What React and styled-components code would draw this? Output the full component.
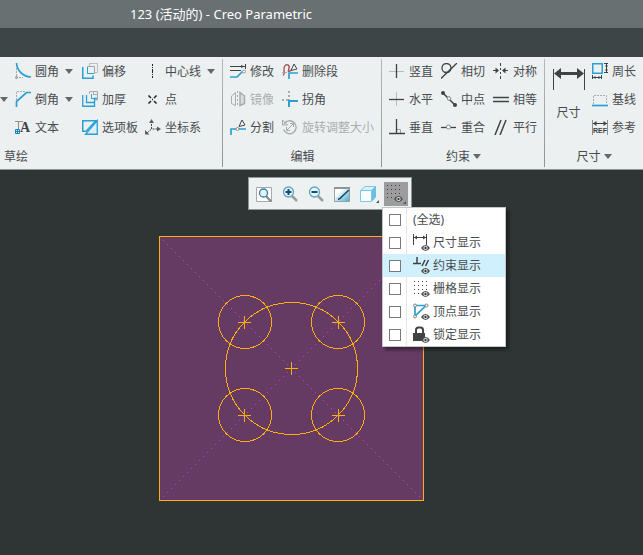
import React from "react";
import styled, { createGlobalStyle } from "styled-components";

const BLUE = "#2b9fd3";
const INK = "#3f4345";
const GREY = "#a9adae";
const ORANGE = "#ffae0d";

const GlobalStyle = createGlobalStyle`
  * { box-sizing: border-box; }
  body {
    margin: 0;
    background: #2f3535;
    font-family: "Noto Sans", "Noto Sans CJK SC", sans-serif;
    font-size: 12px;
    color: #484c4e;
  }
  button, input { font: inherit; color: inherit; margin: 0; }
`;

const Window = styled.div`
  display: flex;
  flex-direction: column;
  min-height: 100vh;
  overflow: hidden;
`;

const TitleBar = styled.header`
  height: 28px;
  padding-left: 130px;
  background: #687071;
  color: #fff;
  font-size: 13px;
  line-height: 28px;
  white-space: nowrap;
`;

const Title = styled.h1`
  margin: 0;
  font: inherit;
`;

const TabStrip = styled.nav`
  height: 29px;
  background: #3d4546;
`;

const RibbonBar = styled.section`
  display: flex;
  background: #edf0f1;
  border-bottom: 1px solid #8a9495;
  overflow: hidden;
`;

const Group = styled.section`
  flex: ${(p) => (p.$width ? `0 0 ${p.$width}px` : "1 0 0")};
  display: flex;
  flex-direction: column;
  background: ${(p) => (p.$width ? "linear-gradient(#b4b9ba, #8f9697) right center / 1px calc(100% - 4px) no-repeat" : "none")};
`;

const Columns = styled.div`
  display: flex;
  padding-left: ${(p) => p.$inset || 0}px;
`;

const Column = styled.div`
  flex: none;
  width: ${(p) => p.$width}px;
  display: grid;
  grid-template-rows: repeat(3, 28px);
`;

const GroupLabel = styled.h2`
  display: flex;
  align-items: center;
  justify-content: ${(p) => (p.$start ? "flex-start" : "center")};
  gap: 3px;
  height: 28px;
  margin: 0;
  padding-top: 2px;
  padding-left: ${(p) => (p.$start ? 4 : 0)}px;
  font: inherit;
`;

const Command = styled.button`
  display: flex;
  align-items: center;
  gap: 4px;
  padding: 0;
  border: 0;
  background: none;
  white-space: nowrap;
  line-height: 18px;
  &:disabled { color: #aaaeaf; }
`;

const CommandText = styled.span`
  padding-top: 2px;
`;

const LargeCommand = styled.button`
  display: flex;
  flex-direction: column;
  align-items: center;
  gap: 14px;
  width: 47px;
  padding: 11px 0 0;
  border: 0;
  background: none;
  line-height: 18px;
`;

const Row = styled.div`
  display: flex;
  align-items: center;
  gap: 6px;
  ${(p) => p.$row && `grid-row: ${p.$row};`}
`;

const ArrowButton = styled.button`
  display: flex;
  padding: 0;
  border: 0;
  background: none;
`;

const Caret = styled.span`
  border: 4px solid transparent;
  border-top: 5px solid #63686a;
  border-bottom: 0;
`;

const Icon = styled.svg`
  flex: none;
  display: block;
  fill: none;
  stroke: ${INK};
`;

const Canvas = styled.main`
  position: relative;
  flex: 1;
  padding: 66px 0 54px 159px;
  background: #2f3535;
`;

const Sketch = styled.svg`
  display: block;
`;

const Toolbar = styled.div`
  position: absolute;
  top: 7px;
  left: 248px;
  display: flex;
  gap: 2px;
  padding: 4px 3px 3px;
  border: 1px solid #8c9697;
  background: #eef1f1;
`;

const Tool = styled.button`
  display: grid;
  place-items: center;
  width: ${(p) => p.$width || 24}px;
  height: 24px;
  padding: 0;
  border: 0;
  background: ${(p) => (p.$active ? "#9d9d9d" : "none")};
`;

const MenuAnchor = styled.div`
  position: relative;
`;

const Menu = styled.div`
  position: absolute;
  z-index: 1;
  top: 25px;
  left: -2px;
  width: 124px;
  border: 1px solid #c4c7c8;
  background: #fff;
  box-shadow: 3px 3px 3px rgba(0, 0, 0, 0.4);
`;

const MenuRow = styled.label`
  display: flex;
  align-items: center;
  height: 23px;
  white-space: nowrap;
  background: ${(p) => (p.$highlight ? "#d0f0fe" : "#fff")};
`;

const CheckCell = styled.span`
  display: grid;
  place-items: center;
  width: 24px;
  height: 23px;
  margin-right: 6px;
  border-right: 1px solid ${(p) => (p.$highlight ? "#d0f0fe" : "#e4e6e7")};
`;

const Check = styled.input`
  appearance: none;
  width: 12px;
  height: 12px;
  border: 1px solid #77797a;
  background: #fff;
  &:checked { background: ${BLUE}; }
`;

const MenuText = styled.span`
  margin-left: ${(p) => (p.$indent ? 2 : 0)}px;
  line-height: 18px;
`;

const Eye = ({ x = 8, y = 11 }) => (
  <g transform={`translate(${x} ${y})`} stroke="none">
    <path d="M0 3Q2 0 4.500 0T9 3Q7 6 4.500 6T0 3Z" fill="#4c4f51" />
    <circle cx="4.500" cy="3" r="2.100" fill="#fff" />
    <circle cx="4.500" cy="3" r="1.200" fill="#333" />
  </g>
);

const gridDots = (cols, rows) => {
  let d = "";
  for (let r = 0; r < rows; r++) for (let c = 0; c < cols; c++) d += `M${c * 4 + 1} ${r * 4 + 1}h1v1h-1z`;
  return d;
};

const cursor = <path d="M12 1L15 6L9 7.500Z" fill="#f4f6f6" />;

const drawings = {
  fillet: (
    <>
      <path d="M1.500 5V14.500H8" stroke={GREY} strokeDasharray="2 1" />
      <path d="M1.500 0C2 7 7 13.500 16 14" stroke={BLUE} strokeWidth="1.700" />
      <circle cx="1.500" cy="14.500" r="1" stroke="#888" />
    </>
  ),
  chamfer: (
    <>
      <path d="M1.500 9V.5H10" stroke={GREY} strokeDasharray="2 1" />
      <path d="M16 1.500H11.500L1.500 10.500V16" stroke={BLUE} strokeWidth="1.700" />
    </>
  ),
  text: (
    <>
      <path d="M0 2.500H8M3.500 2.500V10" stroke="#8b8f90" />
      <text x="5" y="13" fontFamily="Liberation Serif" fontWeight="700" fontSize="14" fill={INK} stroke="none">A</text>
      <path d="M.5 10.500H4.500V14.500H.5ZM2.500 10.500V14.500M.5 12.500H4.500" stroke="#1682b4" fill="#d9f1fa" />
    </>
  ),
  offset: (
    <>
      <path d="M7.500 3V.5H15.500V9.500H13" stroke="#b9bdbe" />
      <path d="M5.500 3.500H12.500V10.500H5.500Z" stroke="#a0a4a5" />
      <path d="M.75 4V15.250H11V12.500" stroke={BLUE} strokeWidth="1.500" />
      <path d="M5.500 4V10.500H12" stroke={BLUE} />
    </>
  ),
  thicken: (
    <>
      <path d="M7.500 3V.5H15.500V9H13M11.500 .5V4M11 3.500H15" stroke="#a6aaab" />
      <path d="M.75 4V15.250H12.500V12M4.500 4V11.500H12.500V7.500H15" stroke={BLUE} strokeWidth="1.300" />
      <path d="M9.500 3V7.500H13" stroke={BLUE} />
    </>
  ),
  palette: (
    <>
      <path d="M.75 1.750H14L4 12.250H.75Z" stroke={BLUE} strokeWidth="1.500" />
      <path d="M15.250 1.500V15.250H3.500Z" fill="#dceff6" stroke={BLUE} strokeWidth="1.300" />
    </>
  ),
  centerline: <path d="M7.500 1V3M7.500 4V5M7.500 6V10M7.500 11V12M7.500 13V15" stroke="#222" />,
  point: <path d="M3.500 4.500L6 7M9 10L11.500 12.500M11.500 4.500L9 7M6 10L3.500 12.500M7 8.500H8" stroke="#222" strokeWidth="1.500" />,
  csys: (
    <>
      <path d="M6.500 5V10H12M6 10.500L2 14" strokeDasharray="2 1" />
      <path d="M6.500 0L9 4H4ZM16 10L12 7.500V12.500ZM0 15.500V11L4.500 15.500Z" fill="#5b5f60" stroke="none" />
    </>
  ),
  modify: (
    <>
      <path d="M0 3.500H15M15.500 1V6M0 7.500H11" />
      <path d="M11 2L14.500 3.500L11 5Z" fill={INK} stroke="none" />
      <path d="M0 14H7L12.500 8.500" stroke={BLUE} strokeWidth="1.700" />
      <circle cx="14" cy="8.500" r="1.500" stroke="#999" fill="#fff" />
    </>
  ),
  mirror: (
    <>
      <path d="M1.500 12.500V5L5.500 1.500V14.500Z" stroke={GREY} />
      <path d="M14.500 12.500V5L10 1.500V14.500Z" stroke={GREY} fill="#dadddd" strokeWidth="1.500" />
      <path d="M7.500 0V16" stroke={GREY} strokeDasharray="2 2" />
    </>
  ),
  divide: (
    <>
      <path d="M1 16V10H6M9 10H16" stroke={BLUE} strokeWidth="1.700" />
      {cursor}
      <circle cx="7.500" cy="10" r="1.500" stroke="#888" fill="#fff" />
    </>
  ),
  deleteSegment: (
    <>
      <path d="M1 12.500C4 10 .5 7 2.500 3.500S8 2 7 5.500S5.500 9 9 7.500" stroke="#a65050" strokeWidth="1.400" />
      {cursor}
      <path d="M7 16V10H16" stroke={BLUE} strokeWidth="1.700" />
      <path d="M0 9.500H6" stroke={GREY} strokeDasharray="2 1" />
    </>
  ),
  corner: (
    <>
      <path d="M7 0V9M0 9H6" stroke={GREY} strokeWidth="2" strokeDasharray="2 2" />
      <path d="M7 16V10H16" stroke={BLUE} strokeWidth="2" />
    </>
  ),
  rotate: (
    <g stroke="#a5a9aa">
      <path d="M2 5A6.500 6.500 0 1 1 1.500 10.500" strokeWidth="1.300" />
      <path d="M.5 1V6H5.500ZM5 11L11 5M4.500 8V11.500H8M8 4.500H11.500V8" />
    </g>
  ),
  vertical: (
    <>
      <path d="M0 8.500H15" stroke="#b7bbbb" />
      <path d="M7.500 1V15" strokeWidth="1.300" />
    </>
  ),
  horizontal: (
    <>
      <path d="M7.500 1V15" stroke="#b7bbbb" />
      <path d="M0 8.500H15" strokeWidth="1.300" />
    </>
  ),
  perpendicular: (
    <>
      <path d="M8 10.500H11.500V14" stroke="#9da1a2" />
      <path d="M7.500 0V14.500M0 14.500H16" strokeWidth="1.300" />
    </>
  ),
  tangent: (
    <>
      <circle cx="5.500" cy="5" r="4.500" strokeWidth="1.300" />
      <path d="M0 15.500L16 0" strokeWidth="1.300" />
    </>
  ),
  midpoint: (
    <>
      <path d="M2 2L14 14" strokeWidth="1.500" />
      <circle cx="2" cy="2" r="2" fill={INK} stroke="none" />
      <circle cx="14" cy="14" r="2" fill={INK} stroke="none" />
      <circle cx="8" cy="7.500" r="1.800" fill="#eee" stroke="#888" />
    </>
  ),
  coincident: (
    <>
      <path d="M0 8.500H15" strokeWidth="1.300" />
      <circle cx="7.500" cy="8" r="2" fill="#fff" stroke="#888" />
    </>
  ),
  symmetric: (
    <>
      <path d="M7.500 0V3M7.500 5V7M7.500 9V11M7.500 13V16M0 7.500H4M11 7.500H15" />
      <path d="M2.500 4.500L6 7.500L2.500 10.500ZM12.500 4.500L9 7.500L12.500 10.500Z" fill={INK} stroke="none" />
    </>
  ),
  equal: <path d="M0 6.500H16M0 10.500H16" strokeWidth="1.500" />,
  parallel: <path d="M2 16L8 1M7 16L13 1" strokeWidth="1.500" />,
  perimeter: (
    <>
      <path d="M.75 .75H10.250V10.250H.75Z" stroke={BLUE} strokeWidth="1.500" />
      <path d="M12 .5H16M12 9.500H16M14.500 1V9M.5 12V16M9.500 12V16M1 14.500H9" />
      <path d="M14.500 1L16 3.500H13ZM14.500 9L16 6.500H13ZM1 14.500L3.500 13V16ZM9 14.500L6.500 13V16Z" fill={INK} stroke="none" />
    </>
  ),
  baseline: (
    <>
      <path d="M1.500 13V4.500H14.500V13" stroke={GREY} strokeDasharray="2 1" />
      <path d="M0 14.500H16" stroke={BLUE} strokeWidth="1.700" />
    </>
  ),
  reference: (
    <>
      <path d="M.5 1V16M15.500 1V16" stroke="#8b8f90" />
      <path d="M1 4.500H15" />
      <path d="M1 4.500L4.500 2V7ZM15 4.500L11.500 2V7Z" fill={INK} stroke="none" />
      <text x="1" y="14" fontFamily="Liberation Sans" fontWeight="700" fontSize="7" fill={INK} stroke="none">REF</text>
    </>
  ),
  zoomFit: (
    <>
      <path d="M.5 1.500H15.500V15.500H.5Z" fill="#fff" stroke="#a5a9aa" />
      <path d="M10 10L15.500 16" stroke="#8b9092" strokeWidth="2.500" />
      <circle cx="7.500" cy="7" r="4" fill="#e1f4fb" stroke="#367e9d" strokeWidth="1.300" />
    </>
  ),
  zoomIn: (
    <>
      <path d="M10 10L15 15" stroke="#999da0" strokeWidth="2.500" />
      <circle cx="6.500" cy="6" r="5" fill="#e7f6fc" stroke="#5ba6c4" strokeWidth="1.300" />
      <path d="M3.500 6H9.500M6.500 3V9" stroke="#114e6b" strokeWidth="2" />
    </>
  ),
  zoomOut: (
    <>
      <path d="M10 10L15 15" stroke="#999da0" strokeWidth="2.500" />
      <circle cx="6.500" cy="6" r="5" fill="#e7f6fc" stroke="#5ba6c4" strokeWidth="1.300" />
      <path d="M3.500 6H9.500" stroke="#114e6b" strokeWidth="2" />
    </>
  ),
  repaint: (
    <>
      <defs>
        <linearGradient id="screen" x2="1" y2="1">
          <stop offset=".3" stopColor="#fff" />
          <stop offset="1" stopColor="#3fa8cf" />
        </linearGradient>
      </defs>
      <path d="M.5 1.500H15.500V15.500H.5Z" fill="url(#screen)" stroke="#9aa1a3" />
      <path d="M0 2H16" stroke="#8d9597" strokeWidth="2" />
      <path d="M4 13.500Q6 13 8 10.500L15 4" stroke="#174759" strokeWidth="1.500" />
    </>
  ),
  cube: (
    <>
      <path d="M1.500 5.500L6 1.500H16.500L12.500 5.500Z" fill="#d6f1fb" stroke="#7cc9e3" />
      <path d="M12.500 5.500L16.500 1.500V12L12.500 16.500Z" fill="#6bc0de" stroke="#6bc0de" />
      <path d="M1.500 5.500H12.500V16.500H1.500Z" fill="#f8fdff" stroke="#7cc9e3" />
      <path d="M20 15V18H17Z" fill="#555" stroke="none" />
    </>
  ),
  gridActive: (
    <>
      <path d={gridDots(4, 4)} fill="#444" stroke="none" />
      <Eye x={8} y={12} />
      <path d="M20 17V20H17Z" fill="#555" stroke="none" />
    </>
  ),
  dimShow: (
    <>
      <path d="M.5 0V11M13.500 0V11M1 3.500H13" />
      <path d="M1 3.500L4 1.500V5.500ZM13 3.500L10 1.500V5.500Z" fill={INK} stroke="none" />
      <Eye />
    </>
  ),
  constraintShow: (
    <>
      <path d="M4 0V7M0 6.500H8M9 9L12 3M12.500 9L15.500 3" strokeWidth="1.500" />
      <Eye />
    </>
  ),
  gridShow: (
    <>
      <path d={gridDots(4, 4)} fill="#444" stroke="none" />
      <Eye />
    </>
  ),
  vertexShow: (
    <>
      <path d="M2 2.500H13L2 13Z" stroke={BLUE} strokeWidth="1.700" />
      <g fill="#eee" stroke="#888">
        <circle cx="2" cy="2.500" r="1.500" />
        <circle cx="13.500" cy="2.500" r="1.500" />
        <circle cx="2" cy="13.500" r="1.500" />
      </g>
      <Eye />
    </>
  ),
  lockShow: (
    <>
      <path d="M3 8V4Q3 1.500 5.500 1.500H7.500Q10 1.500 10 4V8" strokeWidth="2" />
      <path d="M0 7H12V15H0Z" fill={INK} stroke="none" />
      <Eye />
    </>
  ),
};

const Glyph = ({ name, width = 16, height = width }) => (
  <Icon width={width} height={height} viewBox={`0 0 ${width} ${height}`} aria-hidden="true">
    {drawings[name]}
  </Icon>
);

const Item = ({ icon, label, menu, disabled }) => (
  <Row>
    <Command type="button" disabled={disabled}>
      <Glyph name={icon} />
      <CommandText>{label}</CommandText>
    </Command>
    {menu && (
      <ArrowButton type="button" aria-label={label}>
        <Caret />
      </ArrowButton>
    )}
  </Row>
);

const groups = [
  {
    label: "草绘", width: 223, start: true,
    columns: [
      { width: 67, items: [["fillet", "圆角", true], ["chamfer", "倒角", true], ["text", "文本"]] },
      { width: 63, items: [["offset", "偏移"], ["thicken", "加厚"], ["palette", "选项板"]] },
      { width: 72, items: [["centerline", "中心线", true], ["point", "点"], ["csys", "坐标系"]] },
    ],
  },
  {
    label: "编辑", width: 159, inset: 7,
    columns: [
      { width: 52, items: [["modify", "修改"], ["mirror", "镜像", false, true], ["divide", "分割"]] },
      { width: 94, items: [["deleteSegment", "删除段"], ["corner", "拐角"], ["rotate", "旋转调整大小", false, true]] },
    ],
  },
  {
    label: "约束", width: 163, inset: 7, menu: true,
    columns: [
      { width: 52, items: [["vertical", "竖直"], ["horizontal", "水平"], ["perpendicular", "垂直"]] },
      { width: 52, items: [["tangent", "相切"], ["midpoint", "中点"], ["coincident", "重合"]] },
      { width: 52, items: [["symmetric", "对称"], ["equal", "相等"], ["parallel", "平行"]] },
    ],
  },
  {
    label: "尺寸", menu: true, large: true,
    columns: [{ width: 48, items: [["perimeter", "周长"], ["baseline", "基线"], ["reference", "参考"]] }],
  },
];

const menuItems = [
  [null, "(全选)"],
  ["dimShow", "尺寸显示"],
  ["constraintShow", "约束显示", true],
  ["gridShow", "栅格显示"],
  ["vertexShow", "顶点显示"],
  ["lockShow", "锁定显示"],
];

const tools = [
  ["zoomFit", "重新调整"],
  ["zoomIn", "放大"],
  ["zoomOut", "缩小"],
  ["repaint", "重画"],
];

const diagonalDots = Array.from({ length: 65 }, (_, i) => {
  const p = (i + 1) * 4;
  return `M${p} ${p}h1v1h-1zM${p} ${264 - p}h1v1h-1z`;
}).join("");

const centres = [[86, 86], [179, 86], [86, 179], [179, 179]];

const SketchDrawing = () => (
  <Sketch width="265" height="265" viewBox="0 0 265 265" shapeRendering="crispEdges" role="img" aria-label="草绘">
    <path d="M.5 .5H264.500V264.500H.5Z" fill="#653a63" stroke={ORANGE} />
    <path d={diagonalDots} fill="#b93cd4" />
    <g fill="none" stroke={ORANGE}>
      <circle cx="132.500" cy="132.500" r="66" />
      {centres.map(([x, y]) => (
        <circle key={`${x}-${y}`} cx={x} cy={y} r="26.500" />
      ))}
      {[[132, 132], [85, 86], [179, 86], [85, 179], [179, 179]].map(([x, y]) => (
        <path key={`${x}-${y}`} d={`M${x - 6} ${y + 0.5}h13M${x + 0.5} ${y - 6}v13`} />
      ))}
    </g>
  </Sketch>
);

export default function App() {
  return (
    <Window>
      <GlobalStyle />
      <TitleBar>
        <Title>123 (活动的) - Creo Parametric</Title>
      </TitleBar>
      <TabStrip />
      <RibbonBar>
        {groups.map((g, gi) => (
          <Group key={gi} $width={g.width}>
            <Columns $inset={g.inset}>
              {g.start && (
                <Column $width={15}>
                  <Row $row={2}>
                    <ArrowButton type="button" aria-label="更多">
                      <Caret />
                    </ArrowButton>
                  </Row>
                </Column>
              )}
              {g.large && (
                <LargeCommand type="button">
                  <Icon width="32" height="22" viewBox="0 0 32 22" aria-hidden="true">
                    <path d="M.5 1V22M31.500 1V22" />
                    <path d="M5 5.500H27" strokeWidth="3" />
                    <path d="M1 5.500L8 0V11ZM31 5.500L24 0V11Z" fill={INK} stroke="none" />
                  </Icon>
                  尺寸
                </LargeCommand>
              )}
              {g.columns.map((c, ci) => (
                <Column key={ci} $width={c.width}>
                  {c.items.map(([icon, label, menu, disabled]) => (
                    <Item key={icon} icon={icon} label={label} menu={menu} disabled={disabled} />
                  ))}
                </Column>
              ))}
            </Columns>
            <GroupLabel $start={g.start}>
              {g.label}
              {g.menu && <Caret />}
            </GroupLabel>
          </Group>
        ))}
      </RibbonBar>
      <Canvas>
        <SketchDrawing />
        <Toolbar role="toolbar">
          {tools.map(([icon, label]) => (
            <Tool key={icon} type="button" aria-label={label}>
              <Glyph name={icon} />
            </Tool>
          ))}
          <Tool type="button" aria-label="显示样式" $width={26}>
            <Glyph name="cube" width={20} height={18} />
          </Tool>
          <MenuAnchor>
            <Tool type="button" aria-label="草绘器显示过滤器" aria-expanded="true" $active>
              <Glyph name="gridActive" width={20} />
            </Tool>
            <Menu>
              {menuItems.map(([icon, label, highlight]) => (
                <MenuRow key={label} $highlight={highlight}>
                  <CheckCell $highlight={highlight}>
                    <Check type="checkbox" />
                  </CheckCell>
                  {icon && <Glyph name={icon} width={18} />}
                  <MenuText $indent={Boolean(icon)}>{label}</MenuText>
                </MenuRow>
              ))}
            </Menu>
          </MenuAnchor>
        </Toolbar>
      </Canvas>
    </Window>
  );
}
